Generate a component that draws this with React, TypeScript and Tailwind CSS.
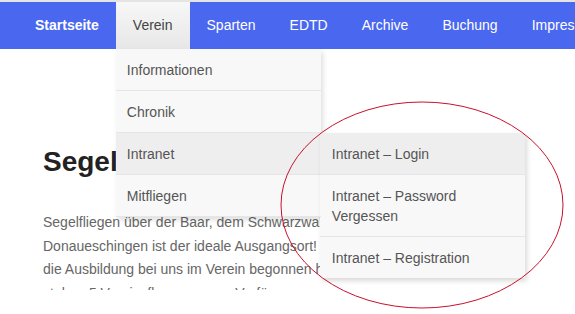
import React from 'react';

const navItems = ['Startseite', 'Verein', 'Sparten', 'EDTD', 'Archive', 'Buchung', 'Impressum'];

const vereinItems = ['Informationen', 'Chronik', 'Intranet', 'Mitfliegen'];

const intranetItems = ['Intranet – Login', 'Intranet – Password Vergessen', 'Intranet – Registration'];

export default function App() {
  return (
    <div className="relative w-[575px] h-[314px] overflow-hidden bg-white font-['Liberation_Sans',Arial,sans-serif]">
      <div className="h-[2px] bg-[#e4e4e4]" />

      {/* Main navigation */}
      <nav className="relative z-20 h-[47px] bg-[#4a67f0] pl-[18px]">
        <ul className="flex h-full whitespace-nowrap">
          {navItems.map((item) => {
            const active = item === 'Verein';
            return (
              <li key={item} className="relative flex">
                <a
                  className={
                    active
                      ? 'flex items-center px-[17px] text-[14px] text-[#444] bg-gradient-to-b from-[#f7f7f7] to-[#e7e7e7]'
                      : item === 'Startseite'
                        ? 'flex items-center px-[17px] text-[14px] font-bold text-white'
                        : 'flex items-center px-[17px] text-[14px] text-white'
                  }
                >
                  {item}
                </a>

                {active && (
                  <ul className="absolute left-0 top-full w-[205px] bg-[#f8f8f8] shadow-[2px_3px_5px_rgba(0,0,0,0.13)]">
                    {vereinItems.map((sub) => (
                      <li
                        key={sub}
                        className={
                          sub === 'Intranet'
                            ? 'relative border-b border-[#e6e6e6] bg-[#eeeeee]'
                            : 'relative border-b border-[#e6e6e6]'
                        }
                      >
                        <a className="block px-[11px] py-[10.5px] text-[14px] leading-5 text-[#555]">{sub}</a>

                        {sub === 'Intranet' && (
                          <ul className="absolute left-full top-0 -ml-px w-[205px] bg-[#f8f8f8] shadow-[2px_3px_5px_rgba(0,0,0,0.15)]">
                            {intranetItems.map((link, i) => (
                              <li
                                key={link}
                                className={
                                  i === 0
                                    ? 'border-b border-[#e6e6e6] bg-[#eeeeee]'
                                    : i === intranetItems.length - 1
                                      ? ''
                                      : 'border-b border-[#e6e6e6]'
                                }
                              >
                                <a className="block px-3 py-[10.5px] text-[14px] leading-5 text-[#555] whitespace-normal">
                                  {link}
                                </a>
                              </li>
                            ))}
                          </ul>
                        )}
                      </li>
                    ))}
                  </ul>
                )}
              </li>
            );
          })}
        </ul>
      </nav>

      {/* Page content */}
      <main className="relative z-0 h-[241px] overflow-hidden pl-[43px] pt-[99px]">
        <h1 className="text-[28px] leading-none font-bold text-[#222]">Segelfliegen in Donaueschingen</h1>
        <p className="mt-[35px] text-[14px] leading-[23.5px] text-[#666] whitespace-nowrap">
          Segelfliegen über der Baar, dem Schwarzwald und der Schwäbischen Alb –
          <br />
          Donaueschingen ist der ideale Ausgangsort! Ob als Anfänger oder Profi,
          <br />
          die Ausbildung bei uns im Verein begonnen hat schon so mancher, heute
          <br />
          stehen 5 Vereinsflugzeuge zur Verfügung.
        </p>
      </main>

      {/* Red annotation ellipse */}
      <svg className="pointer-events-none absolute inset-0 z-30" width="575" height="314" viewBox="0 0 575 314">
        <ellipse cx="422" cy="205" rx="141" ry="103" fill="none" stroke="#c8102e" strokeWidth="1" />
      </svg>
    </div>
  );
}
